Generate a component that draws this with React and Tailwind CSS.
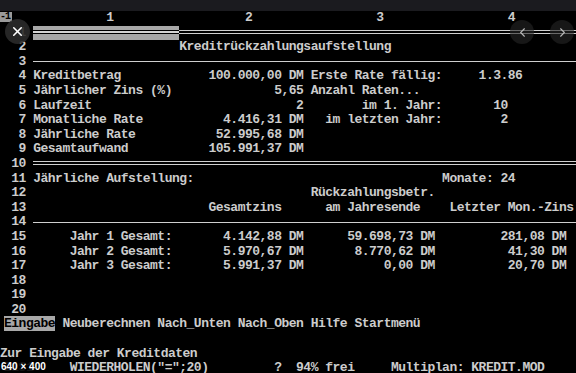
import { X, ChevronLeft, ChevronRight } from 'lucide-react'

// place text segments at fixed character columns of an 80 column screen
const mk = (...parts) => {
  let s = ''
  for (const [col, text] of parts) s = s.padEnd(col) + text
  return s
}

const num = (n) => String(n).padStart(3) + ' '

const rowsTop = [
  mk([2, '2'], [24, 'Kreditrückzahlungsaufstellung']),
]

const rowsMid = [
  mk([2, '4'], [4, 'Kreditbetrag'], [28, '100.000,00 DM'], [42, 'Erste Rate fällig:'], [65, '1.3.86']),
  mk([2, '5'], [4, 'Jährlicher Zins (%)'], [37, '5,65'], [42, 'Anzahl Raten...']),
  mk([2, '6'], [4, 'Laufzeit'], [40, '2'], [49, 'im 1. Jahr:'], [67, '10']),
  mk([2, '7'], [4, 'Monatliche Rate'], [30, '4.416,31 DM'], [44, 'im letzten Jahr:'], [68, '2']),
  mk([2, '8'], [4, 'Jährliche Rate'], [29, '52.995,68 DM']),
  mk([2, '9'], [4, 'Gesamtaufwand'], [28, '105.991,37 DM']),
]

const rowsHead = [
  mk([1, '11'], [4, 'Jährliche Aufstellung:'], [60, 'Monate: 24']),
  mk([1, '12'], [42, 'Rückzahlungsbetr.']),
  mk([1, '13'], [28, 'Gesamtzins'], [44, 'am Jahresende'], [61, 'Letzter Mon.-Zins']),
]

const rowsData = [
  mk([1, '15'], [9, 'Jahr 1 Gesamt:'], [30, '4.142,88 DM'], [47, '59.698,73 DM'], [68, '281,08 DM']),
  mk([1, '16'], [9, 'Jahr 2 Gesamt:'], [30, '5.970,67 DM'], [48, '8.770,62 DM'], [69, '41,30 DM']),
  mk([1, '17'], [9, 'Jahr 3 Gesamt:'], [30, '5.991,37 DM'], [52, '0,00 DM'], [69, '20,70 DM']),
  mk([1, '18']),
  mk([1, '19']),
  mk([1, '20']),
]

function Line({ children }) {
  return <div className="h-[14.6px] whitespace-pre">{children}</div>
}

function RuleRow({ n, double }) {
  return (
    <div className="h-[14.6px] flex items-start">
      <span className="w-[29.2px] shrink-0 whitespace-pre">{num(n)}</span>
      {double ? (
        <div className="flex-1 mt-[4px] h-[4px] border-y border-[#cfcfcf]" />
      ) : (
        <div className="flex-1 mt-[6.5px] h-px bg-[#cfcfcf]" />
      )}
    </div>
  )
}

export default function App() {
  return (
    <div className="relative w-[576px] h-[373px] overflow-hidden bg-black">
      <div className="h-[11px] bg-[#1b1b1f]" />

      <div className="pl-[4px] text-[13px] leading-[14.6px] tracking-[-0.5px] font-bold text-[#cccccc] font-['Liberation_Mono',monospace]">
        {/* column header */}
        <div className="h-[14.6px] flex items-start">
          <span className="-ml-[4px] w-[18.6px] shrink-0 pt-[1px]">
            <span className="block h-[10px] w-[12px] bg-[#9a9a9a] text-black text-[10px] leading-[10px] tracking-[-1px] whitespace-pre">-1</span>
          </span>
          <span className="whitespace-pre">{mk([14, '1'], [33, '2'], [51, '3'], [69, '4']).slice(2)}</span>
        </div>

        {/* row 1 with the cell cursor */}
        <div className="h-[14.6px] flex items-start">
          <span className="w-[29.2px] shrink-0 whitespace-pre">{num(1)}</span>
          <div className="w-[146px] h-full shrink-0 bg-[#a8a8a8] pt-[4px]">
            <div className="h-[4px] border-y border-black bg-[#d4d4d4]" />
          </div>
          <div className="flex-1 mt-[4px] h-[4px] border-y border-[#cfcfcf]" />
        </div>

        {rowsTop.map((r, i) => <Line key={'t' + i}>{r}</Line>)}
        <RuleRow n={3} />
        {rowsMid.map((r, i) => <Line key={'m' + i}>{r}</Line>)}
        <RuleRow n={10} double />
        {rowsHead.map((r, i) => <Line key={'h' + i}>{r}</Line>)}
        <RuleRow n={14} />
        {rowsData.map((r, i) => <Line key={'d' + i}>{r}</Line>)}

        {/* command menu */}
        <div className="h-[14.6px] whitespace-pre">
          <span className="bg-[#a8a8a8] text-black">Eingabe</span>
          {' Neuberechnen Nach_Unten Nach_Oben Hilfe Startmenü'}
        </div>
        <Line>{''}</Line>
        <div className="h-[14.6px] -ml-[4px] whitespace-pre">Zur Eingabe der Kreditdaten</div>
        <Line>{mk([0, 'Z1S1'], [9, 'WIEDERHOLEN("=";20)'], [37, '?'], [40, '94% frei'], [53, 'Multiplan: KREDIT.MOD'])}</Line>
      </div>

      {/* viewer controls over the picture */}
      <button className="absolute left-[5px] top-[19px] w-[25px] h-[25px] rounded-full bg-[#2a2a2a]/90 flex items-center justify-center">
        <X size={15} strokeWidth={2.5} className="text-white" />
      </button>
      <button className="absolute left-[510px] top-[20px] w-[24px] h-[24px] rounded-full bg-[#262626]/60 flex items-center justify-center">
        <ChevronLeft size={15} strokeWidth={1.75} className="text-[#b8b8b8]" />
      </button>
      <button className="absolute left-[550px] top-[20px] w-[24px] h-[24px] rounded-full bg-[#262626]/60 flex items-center justify-center">
        <ChevronRight size={15} strokeWidth={1.75} className="text-[#b8b8b8]" />
      </button>

      <div className="absolute left-0 bottom-[1px] px-[1px] bg-black/90 text-white text-[10px] leading-[11px] font-bold font-['Liberation_Sans',sans-serif]">
        640 × 400
      </div>
    </div>
  )
}
